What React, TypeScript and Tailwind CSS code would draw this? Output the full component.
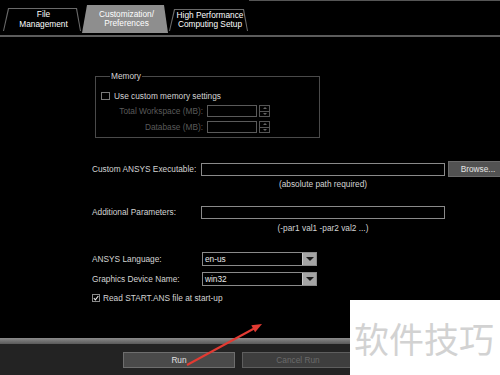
import React from 'react';

const font = { fontFamily: '"Liberation Sans", Arial, sans-serif' };

const Tab = ({ lines, active, w, h }: { lines: string[]; active?: boolean; w: string; h: string }) => (
  <div className={`relative shrink-0 ${w} ${h} ${active ? 'bg-[#8e8e8e]' : 'bg-[#6a6a6a] mb-[2px]'} [clip-path:polygon(0_100%,5px_0,calc(100%-4px)_0,100%_100%)]`}>
    {!active && (
      <div className="absolute left-[1px] right-[1px] top-[1px] bottom-0 bg-black [clip-path:polygon(0_100%,5px_0,calc(100%-4px)_0,100%_100%)]" />
    )}
    <div className="relative h-full flex flex-col items-center justify-center text-white text-[8.3px] leading-[9.5px] pl-[3px] whitespace-nowrap">
      {lines.map((l, i) => (
        <span key={i}>{l}</span>
      ))}
    </div>
  </div>
);

const Spinner = () => (
  <div className="w-[11px] h-[12px] flex flex-col border border-[#555]">
    <div className="flex-1 flex items-center justify-center border-b border-[#555]">
      <div className="w-0 h-0 border-l-[2px] border-r-[2px] border-b-[2px] border-l-transparent border-r-transparent border-b-[#666]" />
    </div>
    <div className="flex-1 flex items-center justify-center">
      <div className="w-0 h-0 border-l-[2px] border-r-[2px] border-t-[2px] border-l-transparent border-r-transparent border-t-[#666]" />
    </div>
  </div>
);

const Dropdown = ({ value }: { value: string }) => (
  <div className="w-[115px] h-[14px] shrink-0 flex border border-[#8a8a8a] bg-black">
    <div className="flex-1 flex items-center pl-[2px] text-[#e8e8e8]">{value}</div>
    <div className="w-[14px] h-full bg-[#a4a4a4] border-l border-[#c8c8c8] flex items-center justify-center">
      <div className="w-0 h-0 border-l-[4px] border-r-[4px] border-t-[4px] border-l-transparent border-r-transparent border-t-[#1a1a1a]" />
    </div>
  </div>
);

export default function App() {
  return (
    <div className="relative w-[500px] h-[375px] overflow-hidden bg-black flex flex-col text-[8.3px] text-[#d4d4d4]" style={font}>
      {/* Tabs */}
      <div className="h-[33px] flex items-end pl-[3px] gap-[1px] shrink-0">
        <Tab lines={['File', 'Management']} w="w-[78px]" h="h-[23px]" />
        <Tab lines={['Customization/', 'Preferences']} active w="w-[86px]" h="h-[28px]" />
        <Tab lines={['High Performance', 'Computing Setup']} w="w-[79px]" h="h-[22px]" />
        <div className="flex-1 self-start h-[1px] bg-[#555]" />
      </div>
      <div className="h-[2px] shrink-0" />
      <div className="h-[2px] bg-[#5c5c5c] shrink-0" />

      {/* Content */}
      <div className="h-[301px] shrink-0 pl-[92px] flex flex-col">
        {/* Memory group */}
        <div className="relative ml-[3px] mt-[39px] w-[225px] h-[62px] border border-[#4a4a4a]">
          <span className="absolute left-[14px] -top-[6px] bg-black px-[1px] leading-[10px] text-[#d4d4d4]">Memory</span>
          <div className="mt-[14px] h-[10px] pl-[5px] flex items-center gap-[4px]">
            <div className="w-[9px] h-[8px] border border-[#7a7a7a]" />
            <span>Use custom memory settings</span>
          </div>
          <div className="mt-[4px] h-[12px] flex items-center">
            <span className="w-[107px] shrink-0 text-right text-[#5a5a5a]">Total Workspace (MB):</span>
            <div className="ml-[4px] w-[50px] h-[12px] shrink-0 border border-[#5a5a5a]" />
            <div className="ml-[2px]"><Spinner /></div>
          </div>
          <div className="mt-[4px] h-[12px] flex items-center">
            <span className="w-[107px] shrink-0 text-right text-[#5a5a5a]">Database (MB):</span>
            <div className="ml-[4px] w-[50px] h-[12px] shrink-0 border border-[#5a5a5a]" />
            <div className="ml-[2px]"><Spinner /></div>
          </div>
        </div>

        {/* Custom executable */}
        <div className="mt-[23px] h-[16px] flex items-center">
          <span className="w-[109px] shrink-0">Custom ANSYS Executable:</span>
          <div className="w-[244px] h-[13px] shrink-0 border border-[#8a8a8a]" />
          <div className="ml-[3px] w-[60px] h-[16px] shrink-0 bg-[#525252] border border-[#6a6a6a] flex items-center justify-center text-[#e4e4e4]">
            Browse...
          </div>
        </div>
        <div className="mt-[2px] h-[10px] flex items-center">
          <span className="ml-[109px] w-[244px] shrink-0 text-center">(absolute path required)</span>
        </div>

        {/* Additional parameters */}
        <div className="mt-[17px] h-[13px] flex items-center">
          <span className="w-[109px] shrink-0">Additional Parameters:</span>
          <div className="w-[244px] h-[13px] shrink-0 border border-[#8a8a8a]" />
        </div>
        <div className="mt-[4px] h-[10px] flex items-center">
          <span className="ml-[109px] w-[244px] shrink-0 text-center">(-par1 val1 -par2 val2 ...)</span>
        </div>

        {/* Dropdowns */}
        <div className="mt-[19px] h-[14px] flex items-center">
          <span className="w-[110px] shrink-0">ANSYS Language:</span>
          <Dropdown value="en-us" />
        </div>
        <div className="mt-[6px] h-[14px] flex items-center">
          <span className="w-[110px] shrink-0">Graphics Device Name:</span>
          <Dropdown value="win32" />
        </div>
        <div className="mt-[7px] h-[10px] flex items-center gap-[3px]">
          <div className="w-[8px] h-[8px] border border-[#8a8a8a] flex items-center justify-center">
            <svg width="6" height="6" viewBox="0 0 6 6">
              <path d="M0.8 3.2 L2.4 4.8 L5.3 1" fill="none" stroke="#e8e8e8" strokeWidth="1.1" />
            </svg>
          </div>
          <span>Read START.ANS file at start-up</span>
        </div>
      </div>

      {/* Bottom bar */}
      <div className="h-[6px] shrink-0 bg-gradient-to-b from-[#8c8c8c] to-[#5a5a5a]" />
      <div className="h-[31px] shrink-0 bg-[#232323] pt-[8px] pl-[123px] flex items-start gap-[7px]">
        <div className="w-[112px] h-[16px] bg-[#4a4a4a] border border-[#6e6e6e] flex items-center justify-center text-[#e0e0e0]">Run</div>
        <div className="w-[112px] h-[16px] bg-[#3e3e3e] border border-[#5e5e5e] flex items-center justify-center text-[#6a6a6a]">Cancel Run</div>
      </div>

      {/* Red annotation arrow */}
      <svg className="absolute left-0 top-0 pointer-events-none" width="500" height="375">
        <line x1="187" y1="365" x2="255" y2="328" stroke="#e23a32" strokeWidth="2" />
        <polygon points="262,324 255.1,332.3 251.3,325.3" fill="#e23a32" />
      </svg>

      {/* Watermark */}
      <div className="absolute left-[350px] top-[300px] w-[150px] h-[75px] bg-white flex items-center pl-[4px]">
        <span className="text-[35px] leading-none text-[#d2d2d2]" style={{ fontFamily: '"Noto Sans CJK SC", sans-serif' }}>软件技巧</span>
      </div>
    </div>
  );
}
